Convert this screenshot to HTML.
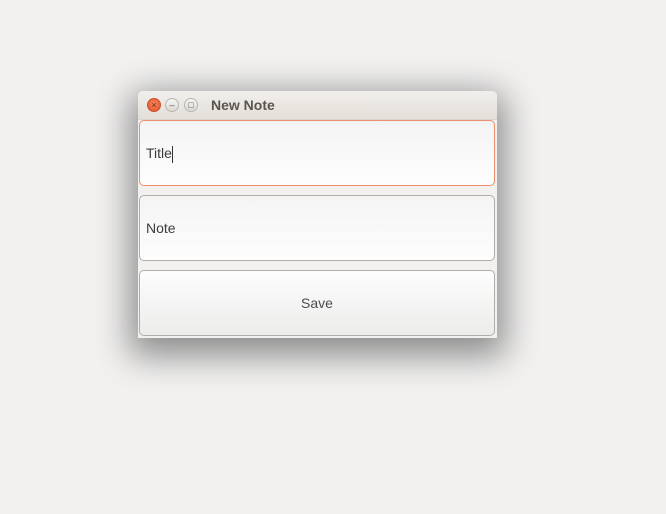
<!DOCTYPE html>
<html><head><style>
body{margin:0;width:666px;height:514px;background:#f2f1f0;position:relative;overflow:hidden;font-family:"Liberation Sans",sans-serif}
.win{position:absolute;left:138px;top:91px;width:359px;height:247px;background:#f2f1f0;border-radius:5px 5px 0 0;box-shadow:0 10px 34px 8px rgba(0,0,0,.42);overflow:hidden}
.tb{height:28px;background:linear-gradient(#f1efec,#e3dfd9);position:relative;border-bottom:1px solid #d8d4ce}
.b{position:absolute;top:7px;width:14px;height:14px;border-radius:50%;box-sizing:border-box;font-size:9px;text-align:center;line-height:13px}
.c{left:9px;background:radial-gradient(circle at 50% 40%,#f6855a,#e0522a);border:1px solid #c9502b;color:#6a2a18}
.m{left:27px;background:linear-gradient(#f6f5f3,#dcd9d4);border:1px solid #b9b5af;color:#555}
.x{left:46px;background:linear-gradient(#f6f5f3,#dcd9d4);border:1px solid #b9b5af;color:#555}
.t{position:absolute;left:73px;top:6px;font-weight:bold;font-size:14px;color:#5a554e}
.f{position:absolute;left:1px;width:356px;height:66px;box-sizing:border-box;border:1px solid #b1aeaa;border-radius:5px;background:linear-gradient(#f4f4f4,#fdfdfd);font-size:14px;color:#3c3c3c;padding-left:6px;line-height:64px}
.f1{top:29px;border-color:#eb8f6d}
.f2{top:104px}
.f3{top:179px;background:linear-gradient(#fdfdfd,#ececeb);text-align:center;padding:0;color:#4c4c4c}
.cur{display:inline-block;width:1px;height:17px;background:#333;vertical-align:middle}
</style></head><body>
<div class="win">
<div class="tb"><div class="b c">×</div><div class="b m">–</div><div class="b x">□</div><div class="t">New Note</div></div>
<div class="f f1">Title<span class="cur"></span></div>
<div class="f f2">Note</div>
<div class="f f3">Save</div>
</div>
</body></html>
